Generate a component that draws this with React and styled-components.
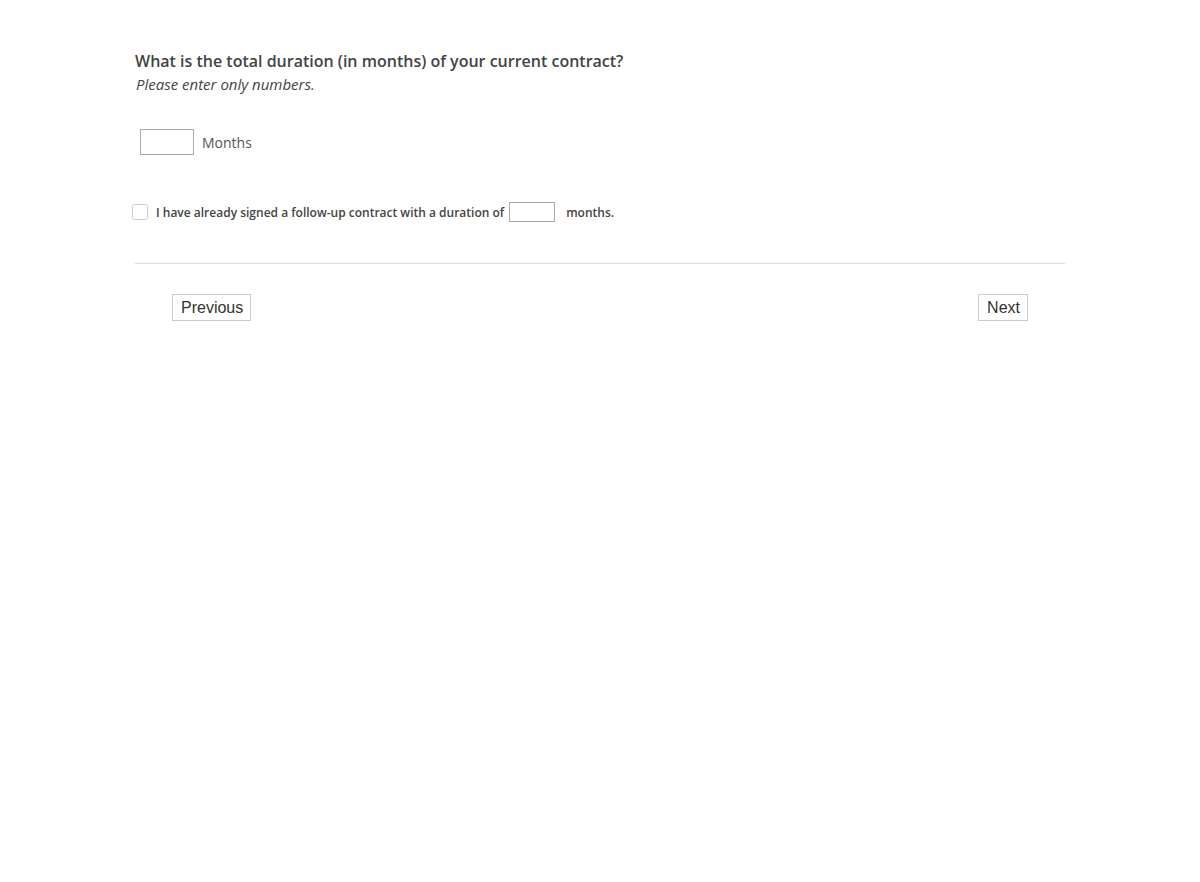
import React from "react";
import styled, { createGlobalStyle } from "styled-components";

const Global = createGlobalStyle`
  html, body { margin: 0; padding: 0; background: #fff; }
  body { font-family: "Open Sans", sans-serif; color: #444; }
`;

const Page = styled.div`
  max-width: 930px;
  margin: 0 auto;
  padding-top: 50px;
`;

const Question = styled.div`
  padding-bottom: 47px;
`;

const Title = styled.h2`
  margin: 0;
  font-size: 16px;
  line-height: 22px;
  font-weight: 600;
  color: #444;
`;

const Hint = styled.div`
  margin: 2px 0 0 1px;
  font-size: 15px;
  line-height: 20px;
  font-style: italic;
  color: #444;
`;

const AnswerRow = styled.div`
  display: flex;
  align-items: center;
  gap: 8px;
  margin: 35px 0 0 5px;
`;

const NumberInput = styled.input`
  box-sizing: border-box;
  width: ${(p) => p.$w}px;
  height: ${(p) => p.$h}px;
  border: 1px solid #aaa;
  border-radius: 0;
  padding: 2px 4px;
  font: inherit;
  font-size: 13px;
  background: #fff;
  outline: none;
`;

const Unit = styled.span`
  font-size: 14px;
  color: #555;
`;

const CheckRow = styled.label`
  display: flex;
  align-items: center;
  margin-left: -3px;
  font-size: 12px;
  font-weight: 600;
  color: #444;
`;

const Box = styled.span`
  box-sizing: border-box;
  width: 16px;
  height: 16px;
  border: 1px solid #ccc;
  border-radius: 3px;
  margin-right: 8px;
  background: #fff;
`;

const Inline = styled.span`
  display: inline-flex;
  margin: 0 11px 0 5px;
`;

const Spacer = styled.div`
  height: 41px;
`;

const Divider = styled.hr`
  border: 0;
  border-top: 1px solid #ddd;
  margin: 0;
`;

const Nav = styled.div`
  display: flex;
  justify-content: space-between;
  padding: 30px 37px 0 37px;
`;

const Button = styled.button`
  box-sizing: border-box;
  height: 27px;
  padding: 0 7px 0 8px;
  border: 1px solid #ccc;
  border-radius: 0;
  background: #fff;
  font-family: "Liberation Sans", Arial, sans-serif;
  font-size: 16px;
  color: #333;
  cursor: pointer;
`;

export default function App() {
  return (
    <>
      <Global />
      <Page>
        <Question>
          <Title>What is the total duration (in months) of your current contract?</Title>
          <Hint>Please enter only numbers.</Hint>
          <AnswerRow>
            <NumberInput $w={54} $h={26} type="text" />
            <Unit>Months</Unit>
          </AnswerRow>
        </Question>
        <CheckRow>
          <Box />
          I have already signed a follow-up contract with a duration of
          <Inline>
            <NumberInput $w={46} $h={20} type="text" />
          </Inline>
          months.
        </CheckRow>
        <Spacer />
        <Divider />
        <Nav>
          <Button>Previous</Button>
          <Button>Next</Button>
        </Nav>
      </Page>
    </>
  );
}
